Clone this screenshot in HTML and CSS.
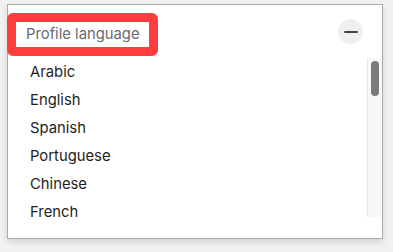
FILE: index.html
```html
<!DOCTYPE html>
<html lang="en">
<head>
<meta charset="utf-8">
<title>Profile language</title>
<link rel="stylesheet" href="styles.css">
</head>
<body>
<div class="panel">
  <div class="header">
    <div class="label">Profile language</div>
    <button class="collapse" aria-label="Collapse"><span class="minus"></span></button>
  </div>
  <div class="list-wrap">
    <ul class="list">
      <li>Arabic</li>
      <li>English</li>
      <li>Spanish</li>
      <li>Portuguese</li>
      <li>Chinese</li>
      <li>French</li>
    </ul>
    <div class="scrollbar"><div class="thumb"></div></div>
  </div>
</div>
</body>
</html>
```
FILE: styles.css
```css
html, body {
  margin: 0;
  padding: 0;
}
body {
  background: #f1f1f4;
  font-family: Inter, "Liberation Sans", sans-serif;
  width: 393px;
  height: 252px;
  overflow: hidden;
}
.panel {
  margin: 4px 0 0 7px;
  width: 376px;
  height: 235px;
  box-sizing: border-box;
  background: #fff;
  border: 1px solid #ababad;
  box-shadow: 0 3px 6px rgba(0, 0, 0, 0.12);
  display: flex;
  flex-direction: column;
}
.header {
  height: 53px;
  flex: none;
  display: flex;
  justify-content: space-between;
  align-items: flex-start;
  padding-right: 19px;
}
.label {
  margin: 8px 0 0 -1px;
  border: 9px solid #fe3e3e;
  border-radius: 6px;
  height: 25px;
  line-height: 25px;
  padding: 0 9px 0 10px;
  font-size: 14.8px;
  color: #6a6a6e;
  background: #fff;
}
.collapse {
  margin-top: 14px;
  width: 25px;
  height: 25px;
  border-radius: 50%;
  border: none;
  padding: 0;
  background: #efeef1;
  display: flex;
  align-items: center;
  justify-content: center;
}
.minus {
  width: 14px;
  height: 2px;
  border-radius: 1px;
  background: #424244;
}
.list-wrap {
  display: flex;
  align-items: flex-start;
}
.list {
  flex: 1;
  list-style: none;
  margin: 0;
  padding: 0;
}
.list li {
  height: 28px;
  line-height: 28px;
  padding-left: 22px;
  font-size: 14.8px;
  color: #1e1e20;
}
.scrollbar {
  width: 15px;
  height: 159px;
  flex: none;
  background: #f8f7fa;
  border-left: 1px solid #e6e5e9;
  padding: 3px 3px 0 3px;
  box-sizing: border-box;
}
.thumb {
  height: 35px;
  border-radius: 4px;
  background: #7b7b7e;
}
```
